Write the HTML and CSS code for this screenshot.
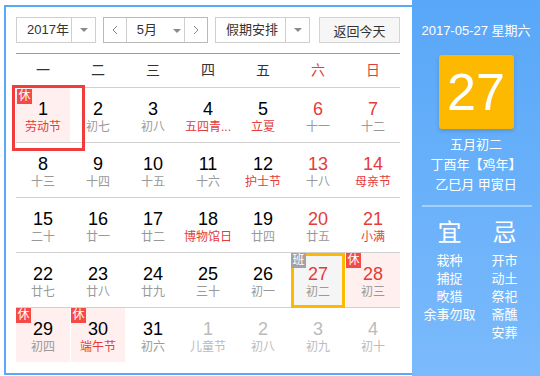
FILE: index.html
```html
<!DOCTYPE html>
<html lang="zh-CN">
<head>
    <meta charset="UTF-8">
    <title>万年历</title>
    <link rel="stylesheet" href="styles.css">
</head>
<body>

<div class="calendar">
    <div class="toolbar">
        <div class="select year-select">
            <span class="select-label">2017年</span>
            <span class="select-arrow"><i class="caret"></i></span>
        </div>
        <div class="select month-select">
            <span class="nav-btn">
                <svg width="6" height="10" viewBox="0 0 6 10"><polyline points="5,1 1,5 5,9" fill="none" stroke="#888" stroke-width="1"/></svg>
            </span>
            <span class="select-label month-label">5月<i class="caret"></i></span>
            <span class="nav-btn">
                <svg width="6" height="10" viewBox="0 0 6 10"><polyline points="1,1 5,5 1,9" fill="none" stroke="#888" stroke-width="1"/></svg>
            </span>
        </div>
        <div class="select holiday-select">
            <span class="select-label">假期安排</span>
            <span class="select-arrow"><i class="caret"></i></span>
        </div>
        <button class="today-btn">返回今天</button>
    </div>

    <div class="week-head">
        <span>一</span><span>二</span><span>三</span><span>四</span><span>五</span>
        <span class="weekend">六</span><span class="weekend">日</span>
    </div>

    <div class="week">
        <div class="day rest selected"><b class="mark">休</b><span class="num">1</span><span class="lunar festival">劳动节</span></div>
        <div class="day"><span class="num">2</span><span class="lunar">初七</span></div>
        <div class="day"><span class="num">3</span><span class="lunar">初八</span></div>
        <div class="day"><span class="num">4</span><span class="lunar festival">五四青...</span></div>
        <div class="day"><span class="num">5</span><span class="lunar festival">立夏</span></div>
        <div class="day weekend"><span class="num">6</span><span class="lunar">十一</span></div>
        <div class="day weekend"><span class="num">7</span><span class="lunar">十二</span></div>
    </div>
    <div class="week">
        <div class="day"><span class="num">8</span><span class="lunar">十三</span></div>
        <div class="day"><span class="num">9</span><span class="lunar">十四</span></div>
        <div class="day"><span class="num">10</span><span class="lunar">十五</span></div>
        <div class="day"><span class="num">11</span><span class="lunar">十六</span></div>
        <div class="day"><span class="num">12</span><span class="lunar festival">护士节</span></div>
        <div class="day weekend"><span class="num">13</span><span class="lunar">十八</span></div>
        <div class="day weekend"><span class="num">14</span><span class="lunar festival">母亲节</span></div>
    </div>
    <div class="week">
        <div class="day"><span class="num">15</span><span class="lunar">二十</span></div>
        <div class="day"><span class="num">16</span><span class="lunar">廿一</span></div>
        <div class="day"><span class="num">17</span><span class="lunar">廿二</span></div>
        <div class="day"><span class="num">18</span><span class="lunar festival">博物馆日</span></div>
        <div class="day"><span class="num">19</span><span class="lunar">廿四</span></div>
        <div class="day weekend"><span class="num">20</span><span class="lunar">廿五</span></div>
        <div class="day weekend"><span class="num">21</span><span class="lunar festival">小满</span></div>
    </div>
    <div class="week">
        <div class="day"><span class="num">22</span><span class="lunar">廿七</span></div>
        <div class="day"><span class="num">23</span><span class="lunar">廿八</span></div>
        <div class="day"><span class="num">24</span><span class="lunar">廿九</span></div>
        <div class="day"><span class="num">25</span><span class="lunar">三十</span></div>
        <div class="day"><span class="num">26</span><span class="lunar">初一</span></div>
        <div class="day weekend today"><b class="mark work">班</b><span class="num">27</span><span class="lunar">初二</span></div>
        <div class="day weekend rest"><b class="mark">休</b><span class="num">28</span><span class="lunar">初三</span></div>
    </div>
    <div class="week last">
        <div class="day rest"><b class="mark">休</b><span class="num">29</span><span class="lunar">初四</span></div>
        <div class="day rest"><b class="mark">休</b><span class="num">30</span><span class="lunar festival">端午节</span></div>
        <div class="day"><span class="num">31</span><span class="lunar">初六</span></div>
        <div class="day other"><span class="num">1</span><span class="lunar">儿童节</span></div>
        <div class="day other"><span class="num">2</span><span class="lunar">初八</span></div>
        <div class="day other"><span class="num">3</span><span class="lunar">初九</span></div>
        <div class="day other"><span class="num">4</span><span class="lunar">初十</span></div>
    </div>
</div>

<div class="side">
    <div class="side-date">2017-05-27 星期六</div>
    <div class="side-day">27</div>
    <div class="side-lunar">
        <div>五月初二</div>
        <div>丁酉年【鸡年】</div>
        <div>乙巳月 甲寅日</div>
    </div>
    <div class="side-line"></div>
    <div class="almanac">
        <div class="almanac-col">
            <div class="almanac-title">宜</div>
            <div>栽种</div>
            <div>捕捉</div>
            <div>畋猎</div>
            <div>余事勿取</div>
        </div>
        <div class="almanac-col">
            <div class="almanac-title">忌</div>
            <div>开市</div>
            <div>动土</div>
            <div>祭祀</div>
            <div>斋醮</div>
            <div>安葬</div>
        </div>
    </div>
</div>

</body>
</html>
```

FILE: styles.css
```css
* {
    box-sizing: border-box;
}
body {
    margin: 0;
    height: 376px;
    overflow: hidden;
    display: flex;
    font-family: "Liberation Sans", "Noto Sans CJK SC", sans-serif;
    color: #333;
    background-color: #fff;
}
.calendar {
    width: 408px;
    height: 370px;
    margin: 5px 0 0 4px;
    padding: 10px 0 0 10px;
    border: 2px solid #5aa9f9;
    border-right: none;
}

/* toolbar */
.toolbar {
    display: flex;
    height: 26px;
    margin-bottom: 10px;
}
.select {
    display: flex;
    height: 26px;
    border: 1px solid #cfcfcf;
    background-color: #fff;
    font-size: 13px;
    line-height: 24px;
}
.select-label {
    padding-left: 10px;
}
.select-arrow {
    display: flex;
    align-items: center;
    justify-content: center;
    border-left: 1px solid #cfcfcf;
}
.caret {
    display: inline-block;
    width: 0;
    height: 0;
    border-left: 4px solid transparent;
    border-right: 4px solid transparent;
    border-top: 4px solid #8a8a8a;
    vertical-align: middle;
}
.year-select {
    width: 80px;
}
.year-select .select-label {
    width: 55px;
}
.year-select .select-arrow {
    width: 24px;
}
.month-select {
    width: 105px;
    margin-left: 7px;
    border-color: #b9b9b9;
}
.nav-btn {
    width: 22px;
    display: flex;
    align-items: center;
    justify-content: center;
}
.month-label {
    width: 60px;
    border-left: 1px solid #cfcfcf;
    border-right: 1px solid #cfcfcf;
}
.month-label .caret {
    margin-left: 16px;
}
.holiday-select {
    width: 95px;
    margin-left: 7px;
}
.holiday-select .select-label {
    width: 69px;
}
.holiday-select .select-arrow {
    width: 24px;
}
.today-btn {
    width: 81px;
    height: 26px;
    margin-left: 9px;
    padding: 0;
    border: 1px solid #d3d3d3;
    background-color: #f6f6f6;
    font-family: inherit;
    font-size: 13px;
    color: #333;
}

/* grid */
.week-head, .week {
    display: grid;
    grid-template-columns: repeat(7, 54px);
    column-gap: 1px;
    width: 384px;
}
.week-head {
    height: 35px;
    border-top: 1px solid #5aa9f9;
    border-bottom: 1px solid #d0d0d0;
    font-size: 14px;
    line-height: 33px;
    text-align: center;
    color: #333;
}
.week-head .weekend {
    color: #e53b3b;
}
.week {
    height: 55px;
    border-bottom: 1px solid #d0d0d0;
}
.week.last {
    border-bottom: none;
}
.day {
    position: relative;
    height: 54px;
    padding-top: 11px;
    text-align: center;
}
.num {
    display: block;
    font-size: 18px;
    line-height: 20px;
    color: #000;
}
.lunar {
    display: block;
    font-size: 12px;
    line-height: 16px;
    color: #999;
    white-space: nowrap;
}
.lunar.festival {
    color: #e53b3b;
}
.day.weekend .num {
    color: #e53b3b;
}
.day.other .num, .day.other .lunar {
    color: #bbb;
}
.day.rest {
    background-color: #ffefef;
}
.day.today {
    height: 55px;
    margin-bottom: -1px;
    padding-top: 8px;
    border: 3px solid #fdb900;
    background-color: #f5f5f5;
}
.day.selected::after {
    content: "";
    position: absolute;
    left: -4px;
    top: -3px;
    width: 67px;
    height: 60px;
    border: 3px solid #f23c3c;
}
.mark {
    position: absolute;
    left: 0;
    top: 0;
    width: 15px;
    height: 15px;
    background-color: #f54a45;
    color: #fff;
    font-size: 12px;
    font-weight: normal;
    line-height: 15px;
    text-align: center;
}
.selected .mark {
    left: 1px;
    top: 1px;
}
.mark.work {
    left: -3px;
    top: -3px;
    background-color: #a2a2a2;
}

/* side panel */
.side {
    flex: 1;
    height: 376px;
    padding-top: 22px;
    background: linear-gradient(#58a7f8, #7bbafc);
    color: #fff;
    text-align: center;
}
.side-date {
    font-size: 13px;
    line-height: 18px;
}
.side-day {
    width: 75px;
    height: 74px;
    margin: 15px auto 0;
    border-radius: 3px;
    background-color: #fdb900;
    box-shadow: 0 2px 4px rgba(0, 0, 0, 0.15);
    font-size: 52px;
    line-height: 74px;
}
.side-lunar {
    margin-top: 6px;
    font-size: 13px;
    line-height: 20px;
}
.side-line {
    height: 2px;
    margin: 10px 8px 0 10px;
    background-color: rgba(255, 255, 255, 0.4);
}
.almanac {
    display: flex;
    padding-left: 10px;
    margin-top: 11px;
}
.almanac-col {
    width: 55px;
    font-size: 13px;
    line-height: 18px;
}
.almanac-title {
    font-size: 24px;
    line-height: 30px;
    margin-bottom: 4px;
}
```
